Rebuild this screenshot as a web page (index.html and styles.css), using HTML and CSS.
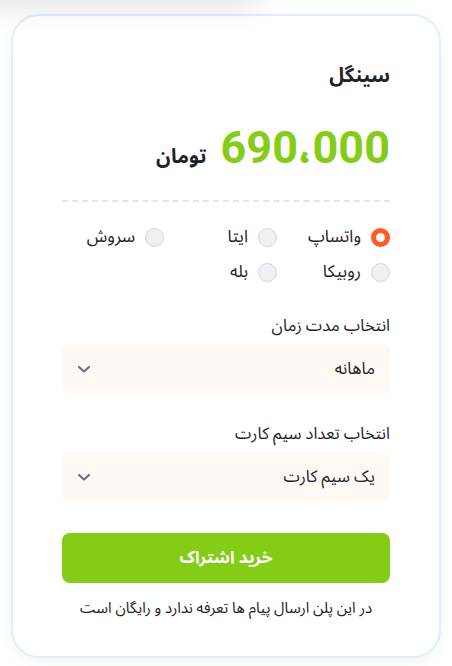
FILE: index.html
```html
<!DOCTYPE html>
<html lang="fa" dir="rtl">
<head>
<meta charset="utf-8">
<link rel="stylesheet" href="styles.css">
</head>
<body>
<div class="ghost"></div>
<div class="card">
  <h2 class="title">سینگل</h2>
  <div class="price"><span class="amount">690،000</span><span class="unit">تومان</span></div>
  <hr class="divider">
  <div class="radios">
    <label class="radio"><span class="dot on"></span>واتساپ</label>
    <label class="radio"><span class="dot"></span>ایتا</label>
    <label class="radio"><span class="dot"></span>سروش</label>
    <label class="radio"><span class="dot"></span>روبیکا</label>
    <label class="radio"><span class="dot"></span>بله</label>
  </div>
  <div class="field">
    <div class="label">انتخاب مدت زمان</div>
    <div class="select"><span>ماهانه</span>
      <svg class="chev" width="16" height="16" viewBox="0 0 16 16"><path d="M3 6l5 4.5 5-4.5" fill="none" stroke="#6b7280" stroke-width="2.2" stroke-linecap="round" stroke-linejoin="round"/></svg>
    </div>
  </div>
  <div class="field">
    <div class="label">انتخاب تعداد سیم کارت</div>
    <div class="select"><span>یک سیم کارت</span>
      <svg class="chev" width="16" height="16" viewBox="0 0 16 16"><path d="M3 6l5 4.5 5-4.5" fill="none" stroke="#6b7280" stroke-width="2.2" stroke-linecap="round" stroke-linejoin="round"/></svg>
    </div>
  </div>
  <button class="buy">خرید اشتراک</button>
  <p class="note">در این پلن ارسال پیام ها تعرفه ندارد و رایگان است</p>
</div>
</body>
</html>
```
FILE: styles.css
```css
* { box-sizing: border-box; }
html, body { margin: 0; padding: 0; background: #fff; }
body {
  font-family: "Roboto", "Noto Sans Arabic", "DejaVu Sans", sans-serif;
  color: #1f2328;
  width: 452px;
  height: 666px;
  overflow: hidden;
  position: relative;
}
.ghost {
  position: absolute;
  left: -40px;
  top: -200px;
  width: 300px;
  height: 200px;
  border-radius: 26px;
  box-shadow: 0 0 30px 6px rgba(0,0,0,0.12);
}
.card {
  margin: 14px 11px 0 11px;
  width: 430px;
  height: 644px;
  border: 2px solid #e3eef8;
  border-radius: 28px;
  padding: 46px 49px 0;
  background: #fff;
  box-shadow: 0 4px 12px rgba(30,60,100,0.06);
}
.title {
  margin: 0;
  font-size: 20px;
  font-weight: 700;
  line-height: 26px;
}
.price {
  display: flex;
  align-items: baseline;
  gap: 14px;
  margin-top: 30px;
  height: 60px;
}
.amount {
  color: #84cc16;
  font-size: 45px;
  font-weight: 700;
  line-height: 60px;
  direction: ltr;
}
.unit {
  font-size: 20px;
  font-weight: 700;
}
.divider {
  border: 0;
  border-top: 2px dashed #dce8f3;
  margin: 22px 0 0;
}
.radios {
  display: grid;
  grid-template-columns: repeat(3, 102px);
  column-gap: 11px;
  row-gap: 13px;
  margin-top: 24px;
}
.radio {
  display: flex;
  align-items: center;
  gap: 10px;
  font-size: 17px;
  height: 22px;
}
.dot {
  width: 19px;
  height: 19px;
  border-radius: 50%;
  background: #eff0f3;
  border: 1px solid #d3d6da;
  flex: none;
}
.dot.on {
  background: #fff;
  border: 5px solid #ff5a1f;
}
.field { margin-top: 32px; }
.field + .field { margin-top: 30px; }
.label {
  font-size: 16.5px;
  line-height: 22px;
  margin-bottom: 7px;
}
.select {
  height: 49px;
  background: #fff8f5;
  border-radius: 7px;
  display: flex;
  align-items: center;
  justify-content: space-between;
  padding: 0 15px 0 14px;
  font-size: 16.5px;
}
.buy {
  display: block;
  width: 100%;
  height: 50px;
  margin-top: 32px;
  border: 0;
  border-radius: 8px;
  background: #84cc16;
  color: #fff;
  font-family: inherit;
  font-size: 17px;
  font-weight: 700;
}
.note {
  margin: 14px 0 0;
  line-height: 22px;
  text-align: center;
  font-size: 15px;
  color: #222;
}
```
